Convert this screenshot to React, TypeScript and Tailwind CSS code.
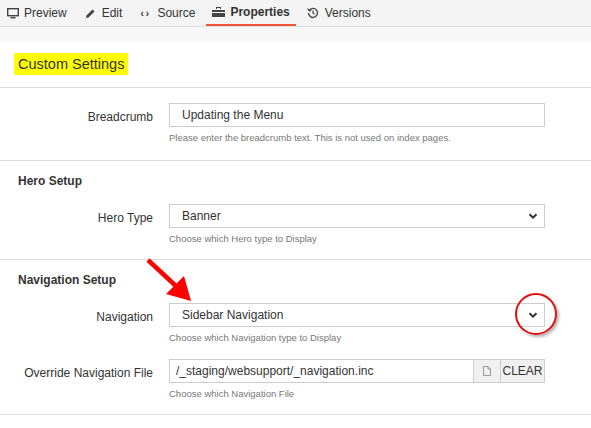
import React from "react";

const Chevron = () => (
  <svg width="10" height="10" viewBox="0 0 10 10"><path d="M1.5 3.2 L5 6.7 L8.5 3.2" stroke="#333" strokeWidth="2" fill="none" /></svg>
);

function Row({ label, children, help }: { label: string; children: React.ReactNode; help: string }) {
  return (
    <div className="flex">
      <div className="w-[153px] shrink-0 text-right pt-[5px] text-[12px] text-[#333]">{label}</div>
      <div className="ml-[16px] w-[376px]">
        {children}
        <div className="text-[9.5px] text-[#777] mt-[5px] leading-[12px]">{help}</div>
      </div>
    </div>
  );
}

const Box = ({ text, select }: { text: string; select?: boolean }) => (
  <div className="h-[24px] border border-[#ccc] bg-white flex items-center justify-between pl-[12px] pr-[6px] text-[12px] text-[#333]">
    <span>{text}</span>
    {select && <Chevron />}
  </div>
);

export default function App() {
  const tabs = [
    ["Preview", <svg width="12" height="11" viewBox="0 0 12 11"><rect x="0.7" y="0.7" width="10.6" height="7" fill="none" stroke="#444" strokeWidth="1.4"/><rect x="3.5" y="9" width="5" height="1.4" fill="#444"/></svg>],
    ["Edit", <svg width="11" height="11" viewBox="0 0 11 11"><path d="M1 10 L1.5 7.5 L7.5 1.5 L9.5 3.5 L3.5 9.5 Z" fill="#444"/></svg>],
    ["Source", <span className="text-[10px] font-bold tracking-[2px]">‹›</span>],
    ["Properties", <svg width="13" height="10" viewBox="0 0 13 10"><path d="M4 0 H9 V2 H8 V1 H5 V2 H4Z M0 3 H13 V5 H0Z M0 6 H13 V10 H0Z" fill="#444"/></svg>],
    ["Versions", <svg width="12" height="12" viewBox="0 0 12 12"><path d="M2.2 3.5 A4.5 4.5 0 1 1 1.5 6" stroke="#444" strokeWidth="1.4" fill="none"/><path d="M0.5 1.5 L2.5 4 L4.5 2.5" stroke="#444" strokeWidth="1.2" fill="none"/><path d="M6 3.5 V6 L7.5 7.2" stroke="#444" strokeWidth="1.2" fill="none"/></svg>],
  ] as const;
  return (
    <div className="w-[591px] h-[428px] bg-white relative overflow-hidden" style={{ fontFamily: '"Liberation Sans", Arial, sans-serif' }}>
      <div className="h-[27px] bg-[#f4f4f4] border-b border-[#ddd] flex pl-0 text-[12px] text-[#333]">
        {tabs.map(([t, icon]) => (
          <div key={t} className={`flex items-center gap-[5px] px-[6px] mr-[5px] h-[26px] ${t === "Properties" ? "border-b-2 border-[#f0553a] font-bold" : ""}`}>
            <span className="w-[13px] flex justify-center">{icon}</span>{t}
          </div>
        ))}
      </div>
      <div className="h-[15px] bg-[#f7f7f7]" />
      <div className="border-b border-[#ddd] h-[46px] pt-[10px] pl-[14px]">
        <span className="bg-[#ffff00] text-[#333] text-[14.5px] px-[4px] py-[3px] inline-block leading-[16px]">Custom Settings</span>
      </div>
      <div className="border-b border-[#ddd] pt-[15px] pb-[16px]">
        <Row label="Breadcrumb" help="Please enter the breadcrumb text. This is not used on index pages."><Box text="Updating the Menu" /></Row>
      </div>
      <div className="border-b border-[#ddd] pt-[11px] pb-[14px]">
        <div className="pl-[18px] font-bold text-[12px] text-[#333] mb-[14px]">Hero Setup</div>
        <Row label="Hero Type" help="Choose which Hero type to Display"><Box text="Banner" select /></Row>
      </div>
      <div className="border-b border-[#ddd] pt-[11px] pb-[14px]">
        <div className="pl-[18px] font-bold text-[12px] text-[#333] mb-[14px]">Navigation Setup</div>
        <Row label="Navigation" help="Choose which Navigation type to Display"><Box text="Sidebar Navigation" select /></Row>
        <div className="h-[15px]" />
        <Row label="Override Navigation File" help="Choose which Navigation File">
          <div className="h-[24px] border border-[#ccc] flex text-[12px] text-[#333]">
            <div className="flex-1 flex items-center pl-[6px]">/_staging/websupport/_navigation.inc</div>
            <div className="w-[27px] bg-[#f0f0f0] border-l border-[#ccc] flex items-center justify-center">
              <svg width="8" height="10" viewBox="0 0 8 10"><path d="M0.5 0.5 H5 L7.5 3 V9.5 H0.5 Z M5 0.5 V3 H7.5" stroke="#999" fill="none"/></svg>
            </div>
            <div className="w-[44px] bg-[#f0f0f0] border-l border-[#ccc] flex items-center justify-center">CLEAR</div>
          </div>
        </Row>
      </div>
      <div className="absolute left-[515px] top-[293px] w-[42px] h-[42px] rounded-full border-2 border-[#e01010] shadow-[2px_2px_3px_rgba(0,0,0,0.3)]" />
      <svg className="absolute left-[145px] top-[257px]" width="50" height="46" viewBox="0 0 50 46">
        <path d="M3 3 L32 30" stroke="#f00" strokeWidth="4.5" />
        <path d="M21 37 L46 44 L39 19 Z" fill="#f00" />
      </svg>
    </div>
  );
}
